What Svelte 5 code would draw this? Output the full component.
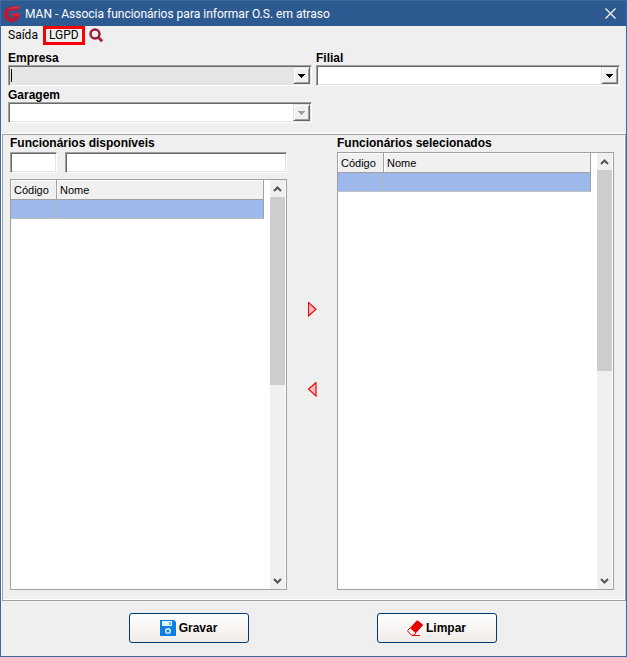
<script lang="ts">
	interface Employee {
		code: string;
		name: string;
	}

	let codeFilter = $state('');
	let nameFilter = $state('');

	// An empty record keeps the highlighted blank row visible
	let available = $state<Employee[]>([{ code: '', name: '' }]);
	let selected = $state<Employee[]>([{ code: '', name: '' }]);
</script>

{#snippet combo(id: string, label: string, focused: boolean, disabled: boolean)}
	<div class="field">
		<label for={id}>{label}</label>
		<div class="combo">
			<select {id} class:focused {disabled}>
				<option value=""></option>
			</select>
			{#if focused}<span class="caret"></span>{/if}
			<span class="drop" class:disabled>
				<svg width="7" height="4" viewBox="0 0 7 4" shape-rendering="crispEdges" aria-hidden="true">
					<path d="M0 0h7v1H6v1H5v1H4v1H3V3H2V2H1V1H0z" fill="currentColor" />
				</svg>
			</span>
		</div>
	</div>
{/snippet}

{#snippet grid(rows: Employee[], label: string)}
	<div class="grid">
		<div class="grid-body">
			<table aria-label={label}>
				<thead>
					<tr><th class="code">Código</th><th>Nome</th></tr>
				</thead>
				<tbody>
					{#each rows as row}
						<tr><td>{row.code}</td><td>{row.name}</td></tr>
					{/each}
				</tbody>
			</table>
		</div>
		<div class="scrollbar">
			<button aria-label="Rolar para cima">
				<svg width="9" height="6" viewBox="0 0 9 6" aria-hidden="true">
					<path d="M1 5l3.500-3.500L8 5" fill="none" stroke="#555" stroke-width="2" />
				</svg>
			</button>
			<div class="track"><div class="thumb"></div></div>
			<button aria-label="Rolar para baixo">
				<svg width="9" height="6" viewBox="0 0 9 6" aria-hidden="true">
					<path d="M1 1l3.500 3.500L8 1" fill="none" stroke="#555" stroke-width="2" />
				</svg>
			</button>
		</div>
	</div>
{/snippet}

<div class="window">
	<header class="titlebar">
		<svg class="logo" width="17" height="16" viewBox="0 0 17 16" aria-hidden="true">
			<path
				d="M16 .8C13.500-.2 8.500-.3 5 1 1.600 2.400 0 5 0 8.200 0 12.700 3 16 7.700 16c4.700 0 8.100-3.200 8.300-9H9L7.200 10h3.600c-.5 1.200-1.500 1.900-3 1.900-2 0-3.200-1.500-3.200-3.700C4.600 5.900 6 4.400 9 4.400h4.700z"
				fill="#b51a36"
			/>
			<path d="M3.500 4C6 2.600 9 2.600 14.800 2.600L16 .8C11 0 6 .8 3.500 4z" fill="#d23a50" />
			<path d="M9 7h7c0 1.100-.2 2.100-.5 3H7.200z" fill="#cb233d" />
		</svg>
		<h1>MAN - Associa funcionários para informar O.S. em atraso</h1>
		<button class="close" aria-label="Fechar">
			<svg width="11" height="11" viewBox="0 0 11 11" aria-hidden="true">
				<path d="M.5.5l10 10M10.500.5l-10 10" stroke="#fff" stroke-width="1.200" />
			</svg>
		</button>
	</header>

	<nav class="menu">
		<button>Saída</button>
		<button class="lgpd">LGPD</button>
		<button aria-label="Pesquisar">
			<svg width="15" height="15" viewBox="0 0 15 15" aria-hidden="true">
				<circle cx="6" cy="6" r="4.500" fill="#f4e9eb" stroke="#981b31" stroke-width="2.400" />
				<path d="M9.300 9.300l3.900 3.900" stroke="#981b31" stroke-width="3" />
				<path d="M9.500 9l4 4" stroke="#c34b5c" stroke-width="1" />
			</svg>
		</button>
	</nav>

	<section class="fields">
		{@render combo('empresa', 'Empresa', true, false)}
		{@render combo('filial', 'Filial', false, false)}
		{@render combo('garagem', 'Garagem', false, true)}
	</section>

	<main class="panel">
		<section class="list">
			<h2>Funcionários disponíveis</h2>
			<div class="filters">
				<input class="code" aria-label="Código" bind:value={codeFilter} />
				<input aria-label="Nome" bind:value={nameFilter} />
			</div>
			{@render grid(available, 'Funcionários disponíveis')}
		</section>

		<div class="transfer">
			<button aria-label="Adicionar">
				<svg width="9" height="15" viewBox="0 0 9 15" aria-hidden="true">
					<path d="M.5.5v13.500L8 7.200z" fill="#fbb" stroke="#e01010" stroke-width="1.200" />
				</svg>
			</button>
			<button aria-label="Remover">
				<svg width="9" height="15" viewBox="0 0 9 15" aria-hidden="true">
					<path d="M8 .5v13.500L.5 7.200z" fill="#fbb" stroke="#e01010" stroke-width="1.200" />
				</svg>
			</button>
		</div>

		<section class="list">
			<h2>Funcionários selecionados</h2>
			{@render grid(selected, 'Funcionários selecionados')}
		</section>
	</main>

	<footer class="actions">
		<button>
			<svg width="16" height="16" viewBox="0 0 16 16" aria-hidden="true">
				<path d="M0 0h14l2 2v14H0z" fill="#0b80e4" />
				<path d="M2 1h10v5H2z" fill="#e3f3ff" />
				<path d="M9 2h2v3H9z" fill="#6bb6f2" />
				<circle cx="8" cy="11" r="2.300" fill="none" stroke="#d8edff" stroke-width="1.500" />
			</svg>
			Gravar
		</button>
		<button>
			<svg width="16" height="16" viewBox="0 0 16 16" aria-hidden="true">
				<path d="M3 8L9.600.8q.7-.7 1.500 0l4.500 3.500q.6.700 0 1.400l-6.900 7.600z" fill="#e60000" />
				<path d="M3 8L.8 10.200q-.4.5 0 1l3.700 4h2.700L8.700 13" fill="none" stroke="#e60000" stroke-width="1" />
				<path d="M5 15.500h8" stroke="#e60000" />
			</svg>
			Limpar
		</button>
	</footer>
</div>

<style>
	:global(body) {
		margin: 0;
	}

	.window {
		display: flex;
		flex-direction: column;
		min-height: 100vh;
		box-sizing: border-box;
		border: 1px solid #3e689f;
		background: #efefef;
		color: #000;
		font: 11px/14px 'Liberation Sans', Arial, sans-serif;
	}

	button {
		padding: 0;
		border: none;
		background: transparent;
		color: inherit;
		font: inherit;
	}

	svg {
		display: block;
		flex: none;
	}

	h1,
	h2 {
		margin: 0;
	}

	.titlebar {
		display: flex;
		align-items: center;
		height: 25px;
		padding: 0 10px 0 3px;
		background: #2d5a91;
		color: #fff;
	}

	h1 {
		flex: 1;
		margin-left: 4px;
		font: 12px/16px Roboto, 'Open Sans', sans-serif;
	}

	.menu {
		display: flex;
		align-items: center;
		height: 19px;
		padding-left: 7px;
		font: 12px/13px Roboto, 'Open Sans', sans-serif;
	}

	.menu .lgpd {
		margin: 0 4px 0 5px;
		padding: 0 3px;
		border: 3px solid #f00;
	}

	.fields {
		display: grid;
		grid-template-columns: 1fr 1fr;
		gap: 2px 4px;
		padding: 6px 6px 11px 7px;
	}

	label,
	h2 {
		display: block;
		font-size: 12px;
		font-weight: bold;
		line-height: 14px;
	}

	.combo {
		display: grid;
		align-items: center;
	}

	.combo > * {
		grid-area: 1 / 1;
	}

	select,
	input {
		box-sizing: border-box;
		width: 100%;
		height: 21px;
		margin: 0;
		padding: 0 4px;
		border: 1px solid;
		border-color: #a0a0a0 #fff #fff #a0a0a0;
		border-radius: 0;
		box-shadow:
			inset 1px 1px #696969,
			inset -1px -1px #e3e3e3;
		background: #fff;
		font: inherit;
		outline: none;
	}

	select {
		appearance: none;
		opacity: 1;
	}

	select.focused {
		background: #e5e5e5;
	}

	.caret {
		width: 1px;
		height: 13px;
		margin-left: 3px;
		background: #000;
		pointer-events: none;
	}

	.drop {
		display: flex;
		align-items: center;
		justify-content: center;
		justify-self: end;
		box-sizing: border-box;
		width: 17px;
		height: 17px;
		margin-right: 2px;
		border: 1px solid;
		border-color: #e3e3e3 #696969 #696969 #e3e3e3;
		box-shadow:
			inset 1px 1px #fff,
			inset -1px -1px #a0a0a0;
		background: #f0f0f0;
		pointer-events: none;
	}

	.drop.disabled {
		color: #a0a0a0;
	}

	.panel {
		display: grid;
		grid-template-columns: 1fr 50px 1fr;
		flex: 1;
		margin-left: 1px;
		padding: 1px 11px 10px 7px;
		border: 1px solid #a0a0a0;
		box-shadow:
			-1px -1px #fff,
			inset -1px -1px #fff;
	}

	.list {
		display: flex;
		flex-direction: column;
		min-width: 0;
	}

	h2 {
		padding-bottom: 2px;
	}

	.filters {
		display: flex;
		gap: 8px;
		margin-bottom: 6px;
	}

	.filters .code {
		flex: none;
		width: 47px;
	}

	.grid {
		display: flex;
		flex: 1;
		border: 1px solid #a0a0a0;
		background: #fff;
	}

	.grid-body {
		flex: 1;
		margin-right: 6px;
	}

	table {
		width: 100%;
		border-collapse: separate;
		border-spacing: 0;
		table-layout: fixed;
	}

	th,
	td {
		box-sizing: border-box;
		height: 20px;
		padding: 0 3px;
		border-right: 1px solid #a0a0a0;
		border-bottom: 1px solid #a0a0a0;
		text-align: left;
	}

	th {
		box-shadow: inset 1px 1px #fff;
		background: #f0f0f0;
		font-weight: normal;
	}

	th.code {
		width: 46px;
	}

	td {
		height: 19px;
		border-bottom-color: #c0c0c0;
		background: #9db8eb;
	}

	td:first-child {
		border-right-color: #b9b9b9;
	}

	.scrollbar {
		display: flex;
		flex-direction: column;
		width: 15px;
		margin-right: 1px;
		background: #f0f0f0;
	}

	.scrollbar button {
		display: flex;
		align-items: center;
		justify-content: center;
		height: 17px;
	}

	.track {
		display: flex;
		flex-direction: column;
		flex: 1;
	}

	.thumb {
		flex: 0 0 50%;
		background: #cdcdcd;
	}

	.transfer {
		display: flex;
		flex-direction: column;
		align-items: center;
		gap: 65px;
		padding: 166px 0 0 1px;
	}

	.actions {
		display: flex;
		justify-content: center;
		gap: 128px;
		padding: 12px 2px 13px 0;
	}

	.actions button {
		display: flex;
		align-items: center;
		justify-content: center;
		gap: 3px;
		width: 120px;
		height: 30px;
		border: 1px solid #003c74;
		border-radius: 3px;
		background: linear-gradient(#fff, #f0ebe8);
		font-size: 12px;
		font-weight: bold;
	}
</style>
